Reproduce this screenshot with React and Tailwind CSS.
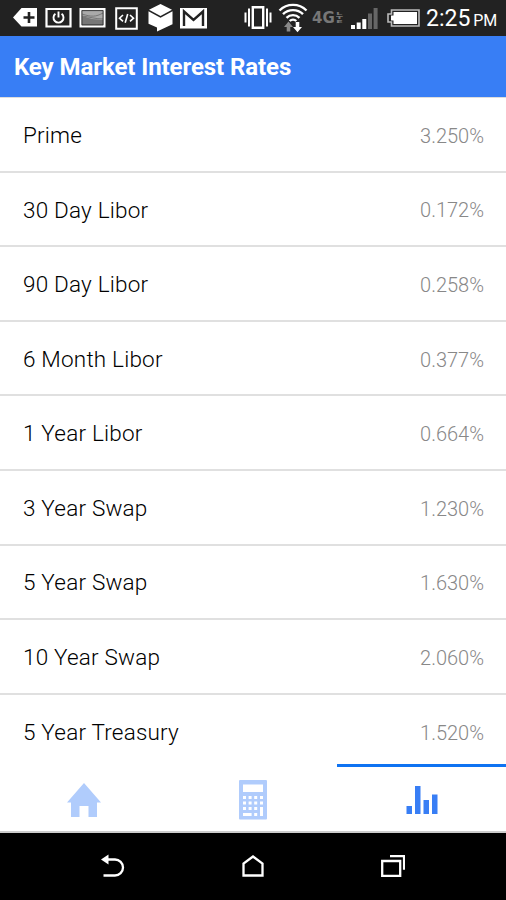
const RATES = [
  { name: 'Prime', value: '3.250%' },
  { name: '30 Day Libor', value: '0.172%' },
  { name: '90 Day Libor', value: '0.258%' },
  { name: '6 Month Libor', value: '0.377%' },
  { name: '1 Year Libor', value: '0.664%' },
  { name: '3 Year Swap', value: '1.230%' },
  { name: '5 Year Swap', value: '1.630%' },
  { name: '10 Year Swap', value: '2.060%' },
  { name: '5 Year Treasury', value: '1.520%' }
];

function NotificationIcons() {
  return (
    <div className="flex items-center h-full">
      <svg className="w-6 h-5 shrink-0" viewBox="0 0 24 20">
        <path d="M0 9.500 8.500 0H24v18.500H8.500z" fill="#fff" />
        <path d="M16 4v11M10.500 9.500h11" stroke="#222" strokeWidth="2.600" />
      </svg>
      <svg className="w-[27px] h-5 shrink-0 ml-2" viewBox="0 0 27 20" fill="none">
        <path d="M1.500 1h24v17.500h-24z" stroke="#fff" strokeWidth="2.200" />
        <path d="M10.400 5.700a5 5 0 1 0 6.200 0M13.500 3.500v6" stroke="#fff" strokeWidth="1.900" />
      </svg>
      <svg className="w-[27px] h-5 shrink-0 ml-[7px]" viewBox="0 0 27 20" fill="none">
        <path d="M1.500 1h24v17.500h-24z" fill="#aaa" stroke="#fff" strokeWidth="2" />
        <path d="M3 8l10 3 11 1v5H3z" fill="#777" />
        <path d="M3 6c9 3 14 3 21-1M3 8c8 1 14 3 21 3" stroke="#777" strokeWidth="1" />
        <path d="M2.900 2.600h21.200v14.300H2.900z" stroke="#222" strokeWidth=".8" />
      </svg>
      <svg className="w-[23px] h-[23px] shrink-0 ml-[9px]" viewBox="0 0 23 23" fill="none" stroke="#fff">
        <path d="M1.200 1.200h20.600v20.600H1.200z" strokeWidth="2" />
        <path d="m8 8-3.500 3.200L8 14.400m7-6.400 3.500 3.200-3.500 3.200M12.700 7l-2.500 8.800" strokeWidth="1.600" />
      </svg>
      <svg className="w-[25px] h-7 shrink-0 ml-2.5" viewBox="0 0 25 28" fill="#fff">
        <path d="M12.500 0 24 5.800 12.500 12 1 5.800z" />
        <path d="m.5 7.300 12 6.400 12-6.400v13L9 27.500v-4L.5 19.700z" />
      </svg>
      <svg className="w-[27px] h-[21px] shrink-0 ml-[7px]" viewBox="0 0 27 21">
        <path d="M0 0h27v20.500H0z" fill="#fff" />
        <path d="M4 18V3.500l9.500 8.500L23 3.500V18" fill="none" stroke="#222" strokeWidth="2.400" />
      </svg>
    </div>
  );
}

function SystemIcons() {
  return (
    <div className="flex items-center h-full text-white">
      <svg className="w-7 h-6 shrink-0" viewBox="0 0 28 24" fill="none" stroke="#fff">
        <path d="M8.800 1.200h10.400v20.600H8.800z" strokeWidth="2.400" />
        <path d="M5 2.500v18M23 2.500v18" strokeWidth="2" />
        <path d="M1.500 6.500v10M26.500 6.500v10" strokeWidth="2" />
      </svg>
      <svg className="w-[30px] h-[30px] shrink-0 ml-1.5" viewBox="0 0 30 30" fill="none">
        <path d="M1.500 7.500a19 19 0 0 1 27 0M5 11.200a14.200 14.200 0 0 1 20 0M8.500 14.800a9.300 9.300 0 0 1 13 0M11.700 18a4.700 4.700 0 0 1 6.600 0" stroke="#fff" strokeWidth="2.400" />
        <path d="m10.500 18.500 4.500 5.500h-2.700v4.500H8.700V24H6z" fill="#888" />
        <path d="m19.500 29.300-4.500-5.300h2.700v-5h3.600v5H24z" fill="#fff" />
      </svg>
      <div className="flex items-center ml-1 w-[34px] text-[#777] font-['DejaVu_Sans',sans-serif] font-bold">
        <span className="text-[15px] leading-none">4G</span>
        <span className="ml-px flex flex-col text-[4px] leading-[4px]">
          <span className="origin-left scale-x-250">L</span>
          <span className="origin-left scale-x-250">T</span>
          <span className="origin-left scale-x-250">E</span>
        </span>
      </div>
      <svg className="w-[27px] h-[21px] shrink-0 ml-[5px]" viewBox="0 0 27 21" fill="#fff">
        <path d="M0 17h4v4H0zM5.700 14.500h4V21h-4zM11.300 11h4v10h-4z" />
        <path d="M17 5.500h4V21h-4zM22.600 0h4v21h-4z" fill="#666" />
      </svg>
      <svg className="w-[33px] h-[18px] shrink-0 ml-[9px]" viewBox="0 0 33 18" fill="none">
        <path d="M4.500 1H32v16H4.500v-4H1V5h3.500z" stroke="#bbb" strokeWidth="1.600" />
        <path d="M6.500 3H30v12H6.500v-3.500H4v-5h2.500z" fill="#fff" />
      </svg>
      <span className="ml-1.5 w-[72px] flex items-baseline whitespace-nowrap text-[23px] leading-9 pt-[3px]">
        2:25<span className="ml-[3px] text-[16px] tracking-[-0.2px]">PM</span>
      </span>
    </div>
  );
}

function HomeIcon() {
  return (
    <svg className="w-[34px] h-[35px]" viewBox="0 0 34 35">
      <path d="M17 0 34 19.500h-4V34h-8.500V23h-9v11H4V19.500H0z" fill="#b0ccfc" />
    </svg>
  );
}

function CalculatorIcon() {
  return (
    <svg className="w-7 h-10" viewBox="0 0 28 40">
      <rect width="28" height="39.500" rx="1" fill="#b0ccfc" />
      <path
        d="M4 4.500h20V12H4zM4 16h3v3H4zm5.600 0h3v3h-3zm5.600 0h3v3h-3zm5.800 0h3v3h-3zM4 21.500h3v3H4zm5.600 0h3v3h-3zm5.600 0h3v3h-3zm5.800 0h3v3h-3zM4 27h3v3H4zm5.600 0h3v3h-3zm5.600 0h3v3h-3zm5.800 0h3v9h-3zM4 33h8.600v3H4zm11.200 0h3v3h-3z"
        fill="#fff"
      />
    </svg>
  );
}

function ChartIcon() {
  return (
    <svg className="w-8 h-7" viewBox="0 0 32 28">
      <path
        d="M.5 20H6v8H.5zM9 0h5.500v28H9zM17.500 14H23v14h-5.500zM26 8.500h5.500V28H26z"
        fill="#387ef5"
      />
    </svg>
  );
}

function TabBar() {
  return (
    <nav className="h-[69px] grid grid-cols-3 bg-white border-b-2 border-[#ccc]">
      <button className="flex justify-center pt-[19px]" aria-label="Home"><HomeIcon /></button>
      <button className="flex justify-center pt-4" aria-label="Calculator"><CalculatorIcon /></button>
      <button className="flex justify-center pt-[19px] border-t-3 border-[#0f73f2]" aria-label="Rates"><ChartIcon /></button>
    </nav>
  );
}

function SystemNav() {
  return (
    <div className="h-[67px] bg-black grid grid-cols-[1fr_auto_1fr] items-center px-[101px] pb-px">
      <svg className="w-6 h-6" viewBox="0 0 24 24" fill="none">
        <path d="M5 5.500h9a8 8 0 0 1 0 16H2.500" stroke="#fff" strokeWidth="2.300" />
        <path d="M0 5.500 7.500.5v10z" fill="#fff" />
      </svg>
      <svg className="w-[22px] h-[22px]" viewBox="0 0 22 22" fill="none">
        <path d="M1.500 20.500V8.500L11 1.500l9.500 7v12z" stroke="#fff" strokeWidth="2.300" />
      </svg>
      <svg className="w-6 h-[22px] justify-self-end" viewBox="0 0 24 22" fill="none" stroke="#fff">
        <path d="M1.200 6h18v14.800h-18z" strokeWidth="2.300" />
        <path d="M9 1.200h14v13.500" strokeWidth="2.200" />
      </svg>
    </div>
  );
}

export default function App() {
  return (
    <div className="w-[506px] h-[900px] flex flex-col overflow-hidden bg-white font-['Roboto',sans-serif]">
      <div className="h-9 shrink-0 bg-[#222] flex items-center justify-between pl-[13px] pr-2">
        <NotificationIcons />
        <SystemIcons />
      </div>
      <header className="h-[61px] shrink-0 bg-[#387ef5] px-3.5 flex items-center">
        <h1 className="text-white text-[24px] tracking-[-0.08px] font-bold whitespace-nowrap">Key Market Interest Rates</h1>
      </header>
      <ul className="flex-1 min-h-0 overflow-hidden border-t border-[#ddd]">
        {RATES.map((rate) => (
          <li
            key={rate.name}
            className="h-[74.6px] pt-[3px] flex items-center justify-between pl-[23px] pr-[22px] border-b-2 border-[#e0e0e0]"
          >
            <span className="text-[22.5px] text-black font-light tracking-[0.2px] whitespace-nowrap">{rate.name}</span>
            <span className="text-[20px] text-[#888] font-light">{rate.value}</span>
          </li>
        ))}
      </ul>
      <TabBar />
      <SystemNav />
    </div>
  );
}
